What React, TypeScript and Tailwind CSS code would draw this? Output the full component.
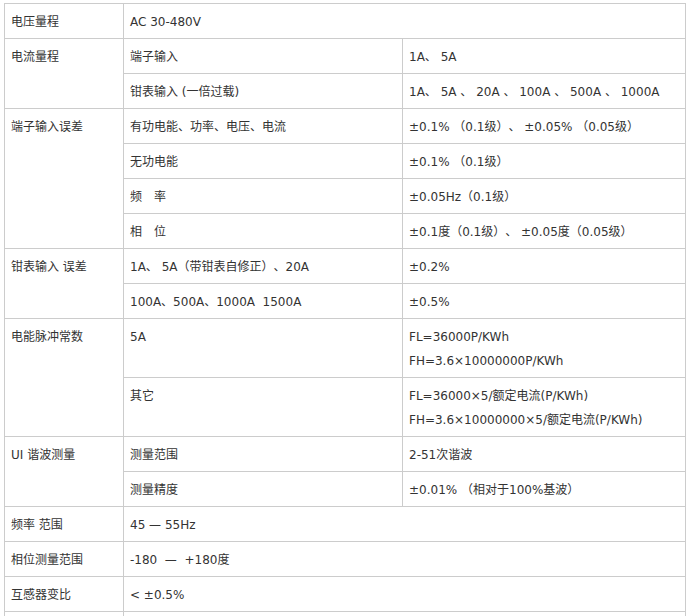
import React from "react";

const td = "border border-[#cccccc] px-[6px] pt-[6px] pb-[4px] align-top leading-[24px]";

export default function App() {
  return (
    <div className="min-h-screen bg-white pl-[4px] pt-[3px] text-[12px] text-[#333333] [text-spacing-trim:space-all] [font-family:'DejaVu_Sans','Noto_Sans_CJK_SC',sans-serif]">
      <table className="w-[681px] table-fixed border-collapse">
        <colgroup>
          <col className="w-[119px]" />
          <col className="w-[279px]" />
          <col className="w-[283px]" />
        </colgroup>
        <tbody>
          <tr>
            <td className={td}>电压量程</td>
            <td className={td} colSpan={2}>AC 30-480V</td>
          </tr>

          {/* 电流量程 */}
          <tr>
            <td className={td} rowSpan={2}>电流量程</td>
            <td className={td}>端子输入</td>
            <td className={td}>1A、 5A</td>
          </tr>
          <tr>
            <td className={td}>钳表输入 (一倍过载)</td>
            <td className={td}>1A、 5A 、 20A 、 100A 、 500A 、 1000A</td>
          </tr>

          {/* 端子输入误差 */}
          <tr>
            <td className={td} rowSpan={4}>端子输入误差</td>
            <td className={td}>有功电能、功率、电压、电流</td>
            <td className={td}>±0.1% （0.1级）、 ±0.05% （0.05级）</td>
          </tr>
          <tr>
            <td className={td}>无功电能</td>
            <td className={td}>±0.1% （0.1级）</td>
          </tr>
          <tr>
            <td className={td}>频　率</td>
            <td className={td}>±0.05Hz（0.1级）</td>
          </tr>
          <tr>
            <td className={td}>相　位</td>
            <td className={td}>±0.1度（0.1级）、 ±0.05度（0.05级）</td>
          </tr>

          {/* 钳表输入误差 */}
          <tr>
            <td className={td} rowSpan={2}>钳表输入 误差</td>
            <td className={td}>1A、 5A（带钳表自修正）、20A</td>
            <td className={td}>±0.2%</td>
          </tr>
          <tr>
            <td className={td}>100A、500A、1000A&nbsp; 1500A</td>
            <td className={td}>±0.5%</td>
          </tr>

          {/* 电能脉冲常数 */}
          <tr>
            <td className={td} rowSpan={2}>电能脉冲常数</td>
            <td className={td}>5A</td>
            <td className={td}>
              FL=36000P/KWh
              <br />
              FH=3.6×10000000P/KWh
            </td>
          </tr>
          <tr>
            <td className={td}>其它</td>
            <td className={td}>
              FL=36000×5/额定电流(P/KWh)
              <br />
              FH=3.6×10000000×5/额定电流(P/KWh)
            </td>
          </tr>

          {/* UI 谐波测量 */}
          <tr>
            <td className={td} rowSpan={2}>UI 谐波测量</td>
            <td className={td}>测量范围</td>
            <td className={td}>2-51次谐波</td>
          </tr>
          <tr>
            <td className={td}>测量精度</td>
            <td className={td}>±0.01% （相对于100%基波）</td>
          </tr>

          <tr>
            <td className={td}>频率 范围</td>
            <td className={td} colSpan={2}>45 — 55Hz</td>
          </tr>
          <tr>
            <td className={td}>相位测量范围</td>
            <td className={td} colSpan={2}>-180&nbsp; —&nbsp; +180度</td>
          </tr>
          <tr>
            <td className={td}>互感器变比</td>
            <td className={td} colSpan={2}>&lt; ±0.5%</td>
          </tr>
          <tr>
            <td className={td}>&nbsp;</td>
            <td className={td} colSpan={2}>&nbsp;</td>
          </tr>
        </tbody>
      </table>
    </div>
  );
}
